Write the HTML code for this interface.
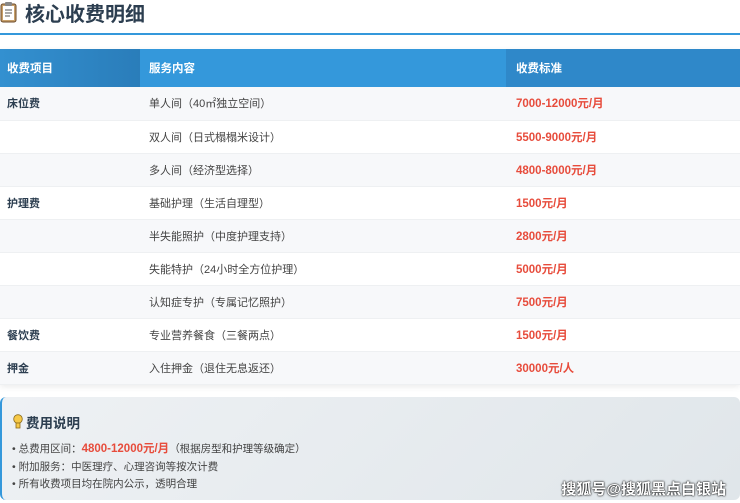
<!DOCTYPE html>
<html><head><meta charset="utf-8"><style>
body{margin:0;width:740px;height:503px;background:#fff;font-family:"Liberation Sans","Noto Sans CJK SC",sans-serif;position:relative;overflow:hidden;color:#333}
.t{position:absolute;left:25px;top:-2px;font-size:20px;font-weight:bold;color:#2c3e50}
.line{position:absolute;left:0;top:33px;width:740px;height:2px;background:#3498db}
table{position:absolute;left:0;top:49px;width:740px;border-collapse:collapse;font-size:11px;box-shadow:0 2px 6px rgba(0,0,0,.08)}
th{height:38px;color:#fff;text-align:left;font-weight:bold;font-size:11.5px;padding:0 0 0 7px}
th.a{background:linear-gradient(90deg,#3390d0,#2a7dba);width:133px}
th.b{background:#3498db;width:357px;padding-left:9px}
th.c{background:#2f88c9;padding-left:10px}
td{height:33px;padding:0 0 0 7px;border-bottom:1px solid #eef0f2;box-sizing:border-box}
td:nth-child(2){padding-left:9px;color:#444}
td:nth-child(3){padding-left:10px;color:#e74c3c;font-weight:bold;font-size:11.5px}
td:first-child{font-weight:bold;color:#2c3e50}
tr:nth-child(even) td{background:#f7f8fa}
.card{position:absolute;left:0;top:397px;width:740px;height:103px;border-radius:6px;background:linear-gradient(135deg,#eef1f4,#e0e6ea);border-left:2px solid #3498db;box-sizing:border-box}
.h{position:absolute;left:12px;top:15px;font-size:13.5px;font-weight:bold;color:#2c3e50}
.l{position:absolute;left:10px;font-size:10.5px;color:#444}
.r{color:#e74c3c;font-weight:bold;font-size:11.5px}
.wm{position:absolute;right:14px;top:478px;color:#fff;font-size:15px;font-weight:bold;text-shadow:0 0 2px #000,0 0 1px #000}
</style></head><body>
<svg style="position:absolute;left:0;top:1px" width="18" height="22" viewBox="0 0 18 22"><rect x="1" y="3" width="15" height="18" rx="2" fill="#c8a06a" stroke="#6b4a2a"/><rect x="3" y="5" width="11" height="14" fill="#fff"/><rect x="5" y="1" width="7" height="4" rx="1" fill="#888"/><path d="M5 9h7M5 12h7M5 15h5" stroke="#555"/></svg>
<div class="t">核心收费明细</div>
<div class="line"></div>
<table>
<tr><th class="a">收费项目</th><th class="b">服务内容</th><th class="c">收费标准</th></tr>
<tr><td>床位费</td><td>单人间（40㎡独立空间）</td><td>7000-12000元/月</td></tr>
<tr><td></td><td>双人间（日式榻榻米设计）</td><td>5500-9000元/月</td></tr>
<tr><td></td><td>多人间（经济型选择）</td><td>4800-8000元/月</td></tr>
<tr><td>护理费</td><td>基础护理（生活自理型）</td><td>1500元/月</td></tr>
<tr><td></td><td>半失能照护（中度护理支持）</td><td>2800元/月</td></tr>
<tr><td></td><td>失能特护（24小时全方位护理）</td><td>5000元/月</td></tr>
<tr><td></td><td>认知症专护（专属记忆照护）</td><td>7500元/月</td></tr>
<tr><td>餐饮费</td><td>专业营养餐食（三餐两点）</td><td>1500元/月</td></tr>
<tr><td>押金</td><td>入住押金（退住无息返还）</td><td>30000元/人</td></tr>
</table>
<div class="card">
<svg style="position:absolute;left:11px;top:17px" width="10" height="16" viewBox="0 0 10 16"><circle cx="5" cy="5" r="4.3" fill="#f7c948" stroke="#8a6a1a" stroke-width=".8"/><rect x="3" y="9" width="4" height="5" fill="#f7c948" stroke="#8a6a1a" stroke-width=".8"/></svg>
<div class="h" style="left:24px">费用说明</div>
<div class="l" style="top:43px">• 总费用区间：<span class="r">4800-12000元/月</span>（根据房型和护理等级确定）</div>
<div class="l" style="top:62px">• 附加服务：中医理疗、心理咨询等按次计费</div>
<div class="l" style="top:79px">• 所有收费项目均在院内公示，透明合理</div>
</div>
<div class="wm">搜狐号@搜狐黑点白银站</div>
</body></html>
